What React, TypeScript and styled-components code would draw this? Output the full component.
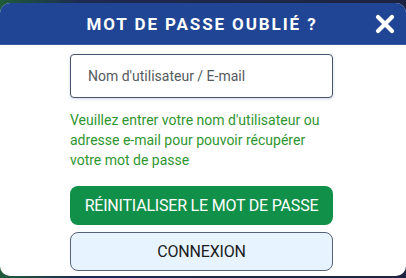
import styled, { createGlobalStyle } from 'styled-components'

const GlobalStyle = createGlobalStyle`
  html, body {
    margin: 0;
    padding: 0;
    background: #1d2233;
  }
  body {
    font-family: Roboto, "Liberation Sans", sans-serif;
  }
`

const Backdrop = styled.div`
  width: 406px;
  height: 278px;
  padding-top: 3px;
  box-sizing: border-box;
  background: linear-gradient(90deg, #1f5a3a 0%, #1d2a52 20%, #1c2440 100%);
`

const Modal = styled.div`
  width: 406px;
  height: 273px;
  background: #ffffff;
  border-radius: 10px;
  overflow: hidden;
  display: flex;
  flex-direction: column;
`

const Header = styled.div`
  height: 41px;
  background: #1f4594;
  display: flex;
  align-items: center;
  justify-content: center;
  position: relative;
  border-bottom: 1px solid #3c5a9e;
`

const Title = styled.h1`
  margin: 0;
  color: #ffffff;
  font: 700 17px Roboto, "Liberation Sans", sans-serif;
  letter-spacing: 1.9px;
  padding-right: 2px;
`

const CloseButton = styled.button`
  position: absolute;
  right: 10px;
  top: 10px;
  width: 22px;
  height: 22px;
  padding: 0;
  border: 0;
  background: none;
  cursor: pointer;
  display: flex;
  align-items: center;
  justify-content: center;
`

const Body = styled.div`
  padding: 9px 73px 0 70px;
  display: flex;
  flex-direction: column;
`

const Input = styled.input`
  box-sizing: border-box;
  width: 263px;
  height: 44px;
  border: 1px solid #48546e;
  border-radius: 4px;
  padding: 0 17px;
  font: 400 14px Roboto, "Liberation Sans", sans-serif;
  color: #333;
  outline: none;
  box-shadow: 0 1px 3px rgba(60, 90, 160, 0.25);

  &::placeholder {
    color: #555a60;
  }
`

const Help = styled.p`
  margin: 12px 0 0;
  color: #2f962f;
  font: 400 14px/20px Roboto, "Liberation Sans", sans-serif;
`

const Button = styled.button<{ $primary?: boolean }>`
  box-sizing: border-box;
  width: 263px;
  height: 39px;
  border-radius: 8px;
  font: 400 16px Roboto, "Liberation Sans", sans-serif;
  text-transform: uppercase;
  cursor: pointer;
  border: ${p => (p.$primary ? '0' : '1px solid #56627c')};
  background: ${p => (p.$primary ? '#11904a' : '#e7f3ff')};
  color: ${p => (p.$primary ? '#ffffff' : '#1c1c1c')};
  letter-spacing: -0.2px;
`

const Actions = styled.div`
  margin-top: 16px;
  display: flex;
  flex-direction: column;
  gap: 7px;
`

export default function App() {
  return (
    <>
      <GlobalStyle />
      <Backdrop>
        <Modal>
          <Header>
            <Title>MOT DE PASSE OUBLIÉ ?</Title>
            <CloseButton aria-label="Fermer">
              <svg width="20" height="20" viewBox="0 0 20 20">
                <path d="M3 3 L17 17 M17 3 L3 17" stroke="#fff" strokeWidth="4.2" strokeLinecap="round" />
              </svg>
            </CloseButton>
          </Header>
          <Body>
            <Input placeholder="Nom d'utilisateur / E-mail" />
            <Help>
              Veuillez entrer votre nom d'utilisateur ou adresse e-mail pour pouvoir récupérer votre mot de passe
            </Help>
            <Actions>
              <Button $primary>Réinitialiser le mot de passe</Button>
              <Button>Connexion</Button>
            </Actions>
          </Body>
        </Modal>
      </Backdrop>
    </>
  )
}
